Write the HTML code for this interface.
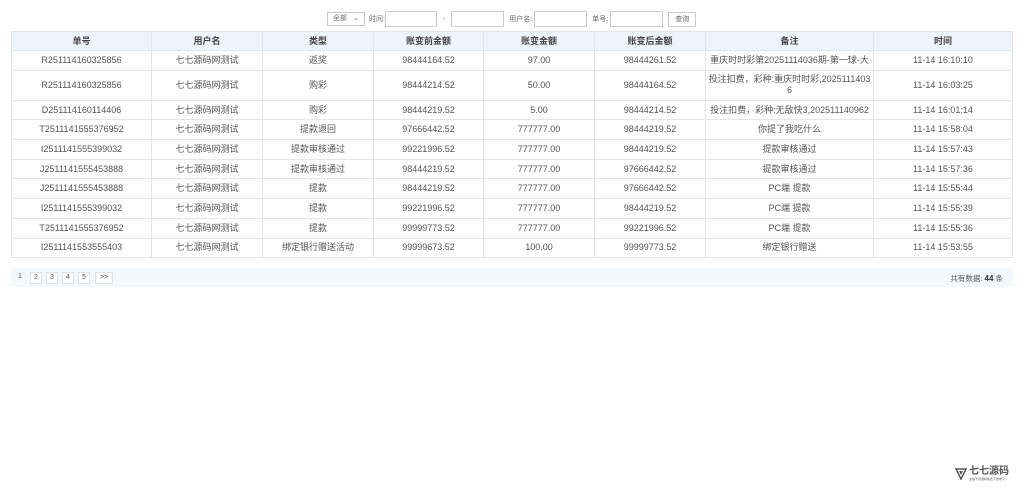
<!DOCTYPE html>
<html><head><meta charset="utf-8"><style>
body{margin:0;background:#fff;font-family:"Liberation Sans","Noto Sans CJK SC",sans-serif;font-size:9px;color:#555;width:1024px;height:500px;overflow:hidden;position:relative}
.search{position:absolute;top:11px;left:327px;height:16px;display:flex;align-items:center;font-size:7px;color:#666}
.search .sel{width:38px;height:14px;border:1px solid #ccc;box-sizing:border-box;font-size:7px;line-height:12px;padding-left:5px;margin-right:4px}
.search .in{height:16px;border:1px solid #ccc;box-sizing:border-box;background:#fff}
.search .btn{height:15px;width:28px;border:1px solid #ccc;box-sizing:border-box;text-align:center;line-height:13px;margin-left:5px}
table{position:absolute;top:31px;left:11px;width:1002px;border-collapse:collapse;table-layout:fixed}
td,th{border:1px solid #e2e6ea;text-align:center;padding:0;line-height:11px}
th{background:#eef4fb;height:18px;font-weight:bold;color:#444}
td{height:18.7px}
.pg{position:absolute;top:268px;left:11px;width:1002px;height:19px;background:#f4f8fc}
.pg span{position:absolute;top:4px;height:10px;border:1px solid #dde3ea;font-size:7px;line-height:10px;text-align:center;width:10px;background:#fff}
.tot{position:absolute;right:10px;top:5px;font-size:7.5px;color:#555}
</style></head><body>
<div class="search"><div class="sel">全部 &nbsp;&nbsp;⌄</div>时间:<div class="in" style="width:52px"></div><span style="margin:0 6px">-</span><div class="in" style="width:53px"></div><span style="margin:0 2px 0 5px">用户名:</span><div class="in" style="width:53px"></div><span style="margin:0 2px 0 5px">单号:</span><div class="in" style="width:53px"></div><div class="btn">查询</div></div>
<table>
<colgroup><col style="width:140px"><col style="width:111px"><col style="width:111px"><col style="width:110px"><col style="width:111px"><col style="width:111px"><col style="width:168px"><col></colgroup>
<tr><th>单号</th><th>用户名</th><th>类型</th><th>账变前金额</th><th>账变金额</th><th>账变后金额</th><th>备注</th><th>时间</th></tr>
<tr><td>R251114160325856</td><td>七七源码网测试</td><td>返奖</td><td>98444164.52</td><td>97.00</td><td>98444261.52</td><td>重庆时时彩第20251114036期-第一球-大</td><td>11-14 16:10:10</td></tr>
<tr><td style="height:29px">R251114160325856</td><td>七七源码网测试</td><td>购彩</td><td>98444214.52</td><td>50.00</td><td>98444164.52</td><td>投注扣费，彩种:重庆时时彩,2025111403<br>6</td><td>11-14 16:03:25</td></tr>
<tr><td>D251114160114406</td><td>七七源码网测试</td><td>购彩</td><td>98444219.52</td><td>5.00</td><td>98444214.52</td><td>投注扣费，彩种:无敌快3,202511140962</td><td>11-14 16:01:14</td></tr>
<tr><td>T2511141555376952</td><td>七七源码网测试</td><td>提款退回</td><td>97666442.52</td><td>777777.00</td><td>98444219.52</td><td>你提了我吃什么</td><td>11-14 15:58:04</td></tr>
<tr><td>I2511141555399032</td><td>七七源码网测试</td><td>提款审核通过</td><td>99221996.52</td><td>777777.00</td><td>98444219.52</td><td>提款审核通过</td><td>11-14 15:57:43</td></tr>
<tr><td>J2511141555453888</td><td>七七源码网测试</td><td>提款审核通过</td><td>98444219.52</td><td>777777.00</td><td>97666442.52</td><td>提款审核通过</td><td>11-14 15:57:36</td></tr>
<tr><td>J2511141555453888</td><td>七七源码网测试</td><td>提款</td><td>98444219.52</td><td>777777.00</td><td>97666442.52</td><td>PC端 提款</td><td>11-14 15:55:44</td></tr>
<tr><td>I2511141555399032</td><td>七七源码网测试</td><td>提款</td><td>99221996.52</td><td>777777.00</td><td>98444219.52</td><td>PC端 提款</td><td>11-14 15:55:39</td></tr>
<tr><td>T2511141555376952</td><td>七七源码网测试</td><td>提款</td><td>99999773.52</td><td>777777.00</td><td>99221996.52</td><td>PC端 提款</td><td>11-14 15:55:36</td></tr>
<tr><td>I2511141553555403</td><td>七七源码网测试</td><td>绑定银行赠送活动</td><td>99999673.52</td><td>100.00</td><td>99999773.52</td><td>绑定银行赠送</td><td>11-14 15:53:55</td></tr>
</table>
<div class="pg">
<span style="left:4px;border:none;background:none">1</span><span style="left:19px">2</span><span style="left:35px">3</span><span style="left:51px">4</span><span style="left:67px">5</span><span style="left:84px;width:16px">&gt;&gt;</span>
<div class="tot">共有数据: <b style="color:#333;font-size:8px">44</b> 条</div>
</div>
<div style="position:absolute;left:955px;top:467px;display:flex;align-items:center;color:#555">
<svg width="12" height="12" viewBox="0 0 12 12"><path d="M1 1h10L6 11z" fill="none" stroke="#555" stroke-width="1.5"/><path d="M4 3h4L6 7z" fill="#555"/></svg>
<div style="margin-left:2px"><div style="font-size:10px;font-weight:bold;line-height:10px">七七源码</div><div style="font-size:3px;line-height:4px">全站干货源码免费下载学习</div></div>
</div>
</body></html>
